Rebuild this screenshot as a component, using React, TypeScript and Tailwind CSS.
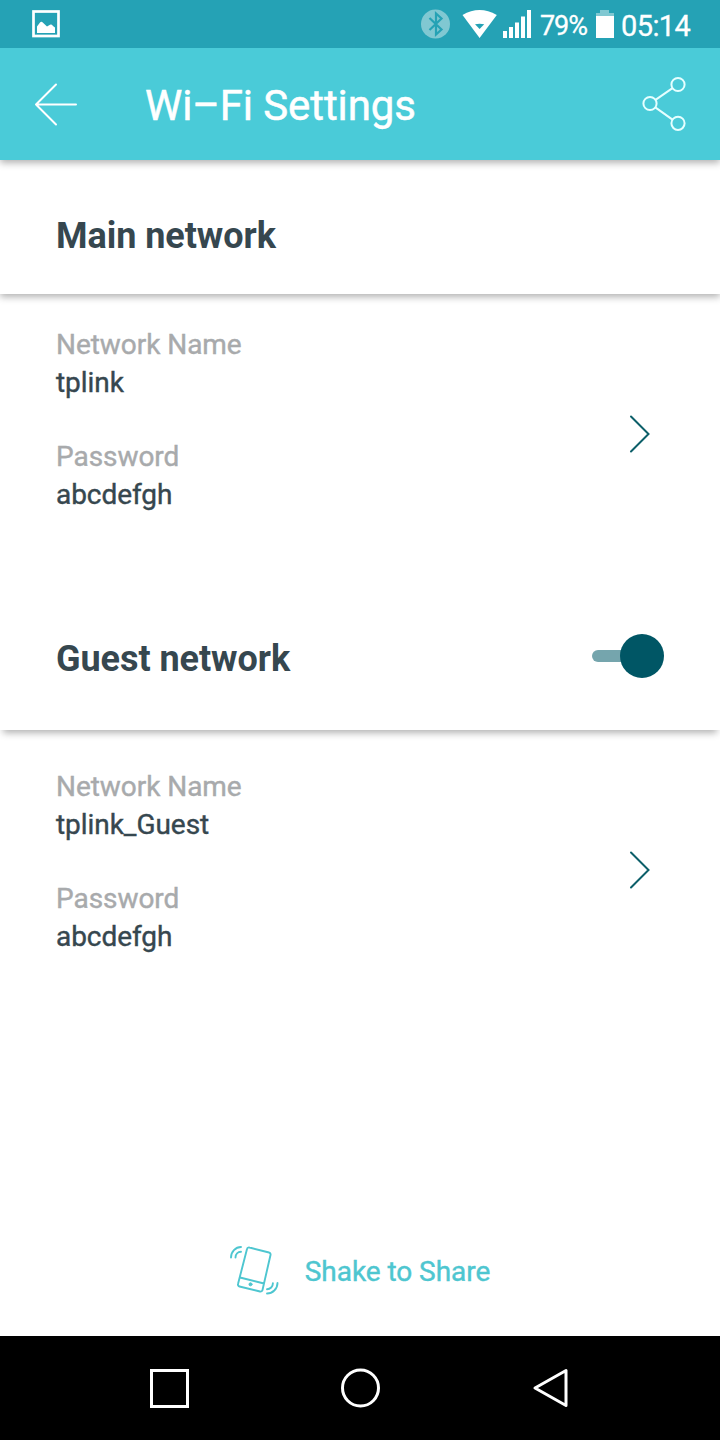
import React from "react";

function StatusBar() {
  return (
    <div className="relative z-20 flex h-12 shrink-0 items-center bg-[#25a2b5] pl-8 pr-[29px] text-white">
      <svg width="28" height="28" viewBox="0 0 28 28" fill="none">
        <rect x="1.5" y="1.5" width="25" height="24.5" stroke="currentColor" strokeWidth="2.7" />
        <path d="M5 23V16.500L8 12.500Q9.500 11 11 12.800L15 16.500 18 14.800Q19.500 14 21 16L23 17.500V23Z" fill="currentColor" />
      </svg>
      <svg className="ml-auto" width="30" height="30" viewBox="0 0 30 30" fill="none">
        <circle cx="14.500" cy="15" r="14.500" fill="#80c8d2" />
        <path d="m8.500 9 12 11.500-5.500 5V4.500l5.500 5-12 11.500" stroke="#25a2b5" strokeWidth="2.200" />
      </svg>
      <svg className="ml-[11px]" width="36" height="30" viewBox="0 0 36 30">
        <path d="M.5 6Q17.500-4 34.800 6L17.600 29Z" fill="currentColor" />
        <path d="M13 15.300q4.800-1.200 9.200 0l-4.600 4.700Z" fill="#25a2b5" />
      </svg>
      <svg className="ml-[4px]" width="30" height="30" viewBox="0 0 30 30" fill="currentColor">
        <rect x="1" y="22" width="4" height="7" />
        <rect x="7" y="18" width="4" height="11" />
        <rect x="13" y="13.500" width="4" height="15.500" />
        <rect x="19" y="7.500" width="4" height="21.500" />
        <rect x="25" y="1" width="4" height="28" />
      </svg>
      <span className="ml-2 w-[49px] whitespace-nowrap pt-[3px] text-[27px] leading-8 tracking-[-1.1px] [-webkit-text-stroke:0.3px]">79%</span>
      <svg className="ml-[6px]" width="20" height="30" viewBox="0 0 20 30">
        <path d="M5 1h9v3h5v4H1V4h4Z" fill="#80c8d2" />
        <path d="M1 7h18v22H1Z" fill="currentColor" />
      </svg>
      <span className="ml-[6px] w-[70px] whitespace-nowrap pt-[3px] text-[29px] leading-8 tracking-[-0.6px] [-webkit-text-stroke:0.3px]">05:14</span>
    </div>
  );
}

function AppBar() {
  return (
    <header className="relative z-10 flex h-28 shrink-0 items-center bg-[#4acbd8] pl-[34px] pr-8 text-white shadow-[0_3px_7px_rgba(0,0,0,0.3)]">
      <svg width="44" height="44" viewBox="0 0 44 44" fill="none" stroke="currentColor" strokeWidth="2" strokeLinecap="round" strokeLinejoin="round">
        <path d="M22 2.500 2 22.500l20 20M2 22.500h40" />
      </svg>
      <h1 className="ml-[67px] whitespace-nowrap pt-1 text-[42px] leading-[50px] tracking-[-0.1px] [-webkit-text-stroke:0.5px]">Wi–Fi Settings</h1>
      <svg className="ml-auto" width="48" height="56" viewBox="0 0 48 56" fill="none" stroke="#e6ffff" strokeWidth="2">
        <circle cx="38" cy="8.500" r="6.600" />
        <circle cx="10" cy="27.500" r="6.600" />
        <circle cx="38" cy="47.300" r="6.600" />
        <path d="m15.500 23.800 17-11.600M15.300 31.400 32.500 43.600" />
      </svg>
    </header>
  );
}

function Field({ label, value }: { label: string; value: string }) {
  return (
    <div className="text-[28px] leading-[38px] tracking-[-0.05px] [-webkit-text-stroke:0.4px]">
      <div className="text-[#a8aaac]">{label}</div>
      <div className="text-[#36474f]">{value}</div>
    </div>
  );
}

function NetworkDetails({ name, password, className }: { name: string; password: string; className: string }) {
  return (
    <div className="flex h-[279px] items-center justify-between pl-14 pr-[69px]">
      <div className={`flex flex-col gap-9 self-start ${className}`}>
        <Field label="Network Name" value={name} />
        <Field label="Password" value={password} />
      </div>
      <svg width="22" height="38" viewBox="0 0 22 38" fill="none" stroke="#0c5f69" strokeWidth="2" strokeLinecap="round">
        <path d="m2 1.500 17.500 17.500L2 36.500" />
      </svg>
    </div>
  );
}

function Toggle() {
  return (
    <button role="switch" aria-checked="true" className="flex h-11 w-[72px] items-center">
      <span className="h-3 w-10 rounded-full bg-[#75a5ad]" />
      <span className="-ml-3 size-11 shrink-0 rounded-full bg-[#005665]" />
    </button>
  );
}

function NavBar() {
  return (
    <nav className="flex h-[104px] shrink-0 items-center justify-between bg-black pl-[149px] pr-[152px] text-white">
      <svg width="40" height="40" viewBox="0 0 40 40" fill="none" stroke="currentColor" strokeWidth="3">
        <rect x="2.500" y="2.500" width="36" height="36" />
      </svg>
      <svg width="40" height="40" viewBox="0 0 40 40" fill="none" stroke="currentColor" strokeWidth="3">
        <circle cx="19.500" cy="20" r="18" />
      </svg>
      <svg width="36" height="40" viewBox="0 0 36 40" fill="none" stroke="currentColor" strokeWidth="3" strokeLinejoin="round">
        <path d="M34 2.500v35L3 20Z" />
      </svg>
    </nav>
  );
}

export default function App() {
  return (
    <div className="flex h-[1440px] w-[720px] flex-col overflow-hidden bg-white font-['Roboto',sans-serif]">
      <StatusBar />
      <AppBar />
      <main className="flex flex-1 flex-col">
        <div className="h-[134px] pl-14 pt-[54px] shadow-[0_3px_7px_rgba(0,0,0,0.3)]">
          <h2 className="text-[36px] font-bold leading-[44px] tracking-[-0.05px] text-[#36474f]">Main network</h2>
        </div>
        <NetworkDetails name="tplink" password="abcdefgh" className="pt-8" />
        <div className="flex h-[157px] items-start justify-between pl-14 pr-14 pt-[61px] shadow-[0_6px_7px_-3px_rgba(0,0,0,0.3)]">
          <h2 className="pt-[3px] text-[36px] font-bold leading-[44px] tracking-[-0.05px] text-[#36474f]">Guest network</h2>
          <Toggle />
        </div>
        <NetworkDetails name="tplink_Guest" password="abcdefgh" className="pt-[38px]" />
        <div className="mb-[39px] mt-auto flex h-[52px] items-center justify-center gap-[25px] text-[#4ec6d0]">
          <svg width="50" height="50" viewBox="0 0 50 50" fill="none" stroke="currentColor" strokeWidth="1.900" strokeLinecap="round" strokeLinejoin="round">
            <path d="M19.500 1.500 39 6.500a2 2 0 0 1 1.500 2.500L32.500 44a2 2 0 0 1-2.500 1.500L9.500 40.500A2 2 0 0 1 8 38L17 3A2 2 0 0 1 19.500 1.500ZM10 31.500 34 37.500" />
            <circle cx="20.500" cy="38.300" r="1.500" fill="currentColor" strokeWidth="1" />
            <path d="M1 11.500C1 6 5.500 1 11 1M5.500 11.500c0-3.300 2.400-5.600 5.500-5.700M37 47.500c5.500 0 10.500-4.500 10.500-10.500M37 43.200c3.300 0 5.900-2.600 5.900-5.900" />
          </svg>
          <span className="pt-0.5 text-[28px] leading-[38px] tracking-[-0.05px] [-webkit-text-stroke:0.4px]">Shake to Share</span>
        </div>
      </main>
      <NavBar />
    </div>
  );
}
